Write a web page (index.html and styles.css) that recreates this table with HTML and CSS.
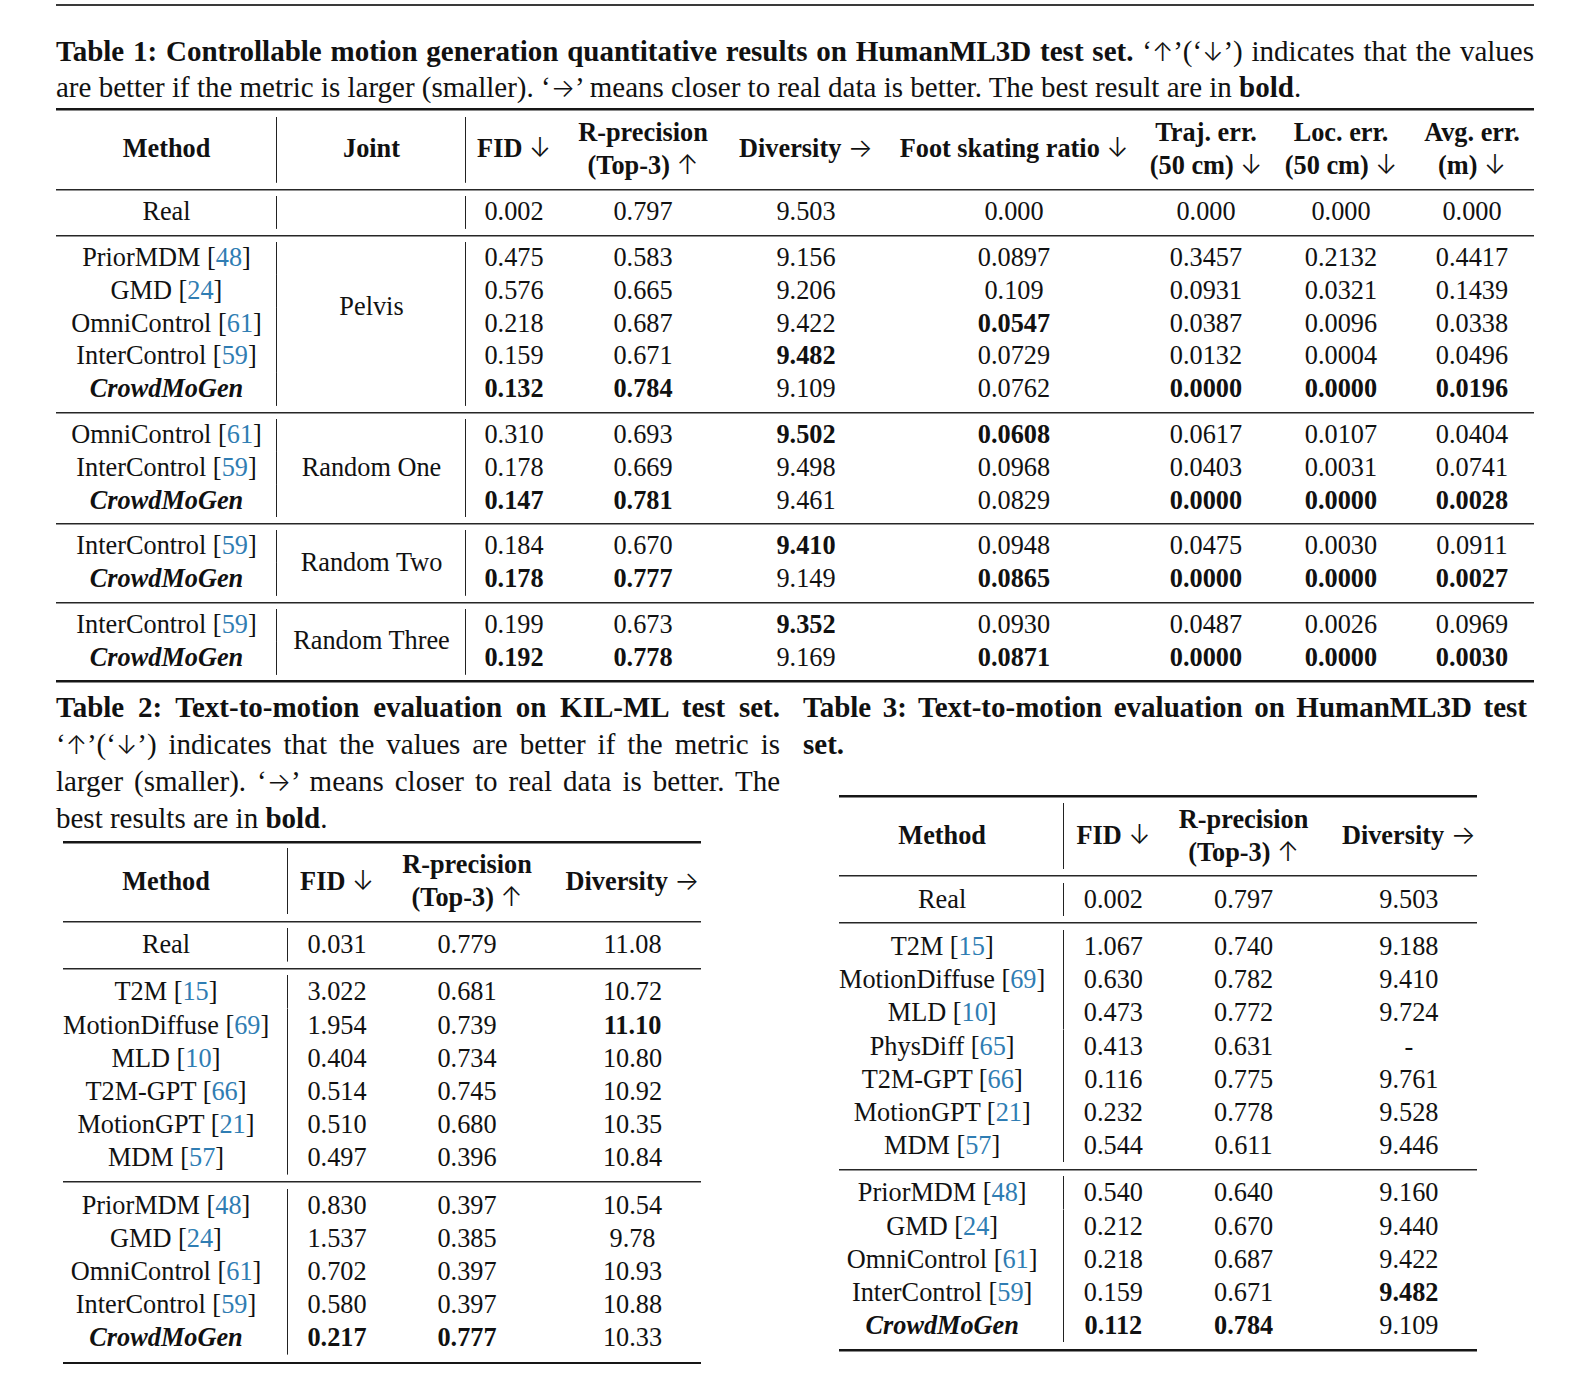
FILE: index.html
```html
<!DOCTYPE html>
<html lang="en">
<head>
<meta charset="utf-8">
<title>Tables</title>
<link rel="stylesheet" href="styles.css">
</head>
<body>
<div class="page">
  <div class="pagerule"></div>

  <section class="t1">
    <p class="cap cap1"><b>Table 1: Controllable motion generation quantitative results on HumanML3D test set.</b> ‘<span class="ar">↑</span>’(‘<span class="ar">↓</span>’) indicates that the values are better if the metric is larger (smaller). ‘<span class="ar">→</span>’ means closer to real data is better. The best result are in <b>bold</b>.</p>
    <table class="tab tab1">
      <colgroup>
        <col style="width:221px"><col style="width:189px"><col style="width:96px"><col style="width:162px"><col style="width:164px"><col style="width:252px"><col style="width:132px"><col style="width:138px"><col style="width:124px">
      </colgroup>
      <tr class="top"><td colspan="9"></td></tr>
      <tr class="hd">
        <th class="v">Method</th><th class="v">Joint</th><th>FID <span class="ar">↓</span></th><th>R-precision<br>(Top-3) <span class="ar">↑</span></th><th>Diversity <span class="ar">→</span></th><th>Foot skating ratio <span class="ar">↓</span></th><th>Traj. err.<br>(50 cm) <span class="ar">↓</span></th><th>Loc. err.<br>(50 cm) <span class="ar">↓</span></th><th>Avg. err.<br>(m) <span class="ar">↓</span></th>
      </tr>
      <tr class="mid"><td colspan="9"></td></tr>
      <tr><td class="v">Real</td><td class="v"></td><td>0.002</td><td>0.797</td><td>9.503</td><td>0.000</td><td>0.000</td><td>0.000</td><td>0.000</td></tr>
      <tr class="mid"><td colspan="9"></td></tr>
      <tr><td class="v">PriorMDM [<span class="c">48</span>]</td><td class="v" rowspan="4">Pelvis</td><td>0.475</td><td>0.583</td><td>9.156</td><td>0.0897</td><td>0.3457</td><td>0.2132</td><td>0.4417</td></tr>
      <tr><td class="v">GMD [<span class="c">24</span>]</td><td>0.576</td><td>0.665</td><td>9.206</td><td>0.109</td><td>0.0931</td><td>0.0321</td><td>0.1439</td></tr>
      <tr><td class="v">OmniControl [<span class="c">61</span>]</td><td>0.218</td><td>0.687</td><td>9.422</td><td><b>0.0547</b></td><td>0.0387</td><td>0.0096</td><td>0.0338</td></tr>
      <tr><td class="v">InterControl [<span class="c">59</span>]</td><td>0.159</td><td>0.671</td><td><b>9.482</b></td><td>0.0729</td><td>0.0132</td><td>0.0004</td><td>0.0496</td></tr>
      <tr><td class="v ours">CrowdMoGen</td><td class="v"></td><td><b>0.132</b></td><td><b>0.784</b></td><td>9.109</td><td>0.0762</td><td><b>0.0000</b></td><td><b>0.0000</b></td><td><b>0.0196</b></td></tr>
      <tr class="mid"><td colspan="9"></td></tr>
      <tr><td class="v">OmniControl [<span class="c">61</span>]</td><td class="v" rowspan="3">Random One</td><td>0.310</td><td>0.693</td><td><b>9.502</b></td><td><b>0.0608</b></td><td>0.0617</td><td>0.0107</td><td>0.0404</td></tr>
      <tr><td class="v">InterControl [<span class="c">59</span>]</td><td>0.178</td><td>0.669</td><td>9.498</td><td>0.0968</td><td>0.0403</td><td>0.0031</td><td>0.0741</td></tr>
      <tr><td class="v ours">CrowdMoGen</td><td><b>0.147</b></td><td><b>0.781</b></td><td>9.461</td><td>0.0829</td><td><b>0.0000</b></td><td><b>0.0000</b></td><td><b>0.0028</b></td></tr>
      <tr class="mid"><td colspan="9"></td></tr>
      <tr><td class="v">InterControl [<span class="c">59</span>]</td><td class="v" rowspan="2">Random Two</td><td>0.184</td><td>0.670</td><td><b>9.410</b></td><td>0.0948</td><td>0.0475</td><td>0.0030</td><td>0.0911</td></tr>
      <tr><td class="v ours">CrowdMoGen</td><td><b>0.178</b></td><td><b>0.777</b></td><td>9.149</td><td><b>0.0865</b></td><td><b>0.0000</b></td><td><b>0.0000</b></td><td><b>0.0027</b></td></tr>
      <tr class="mid"><td colspan="9"></td></tr>
      <tr><td class="v">InterControl [<span class="c">59</span>]</td><td class="v" rowspan="2">Random Three</td><td>0.199</td><td>0.673</td><td><b>9.352</b></td><td>0.0930</td><td>0.0487</td><td>0.0026</td><td>0.0969</td></tr>
      <tr><td class="v ours">CrowdMoGen</td><td><b>0.192</b></td><td><b>0.778</b></td><td>9.169</td><td><b>0.0871</b></td><td><b>0.0000</b></td><td><b>0.0000</b></td><td><b>0.0030</b></td></tr>
      <tr class="bot"><td colspan="9"></td></tr>
    </table>
  </section>

  <div class="cols">
    <section class="col">
      <p class="cap cap2"><b>Table 2: Text-to-motion evaluation on KIL-ML test set.</b> ‘<span class="ar">↑</span>’(‘<span class="ar">↓</span>’) indicates that the values are better if the metric is larger (smaller). ‘<span class="ar">→</span>’ means closer to real data is better. The best results are in <b>bold</b>.</p>
      <table class="tab tab2">
        <colgroup><col style="width:225px"><col style="width:98px"><col style="width:162px"><col style="width:153px"></colgroup>
        <tr class="top"><td colspan="4"></td></tr>
        <tr class="hd"><th class="v m">Method</th><th>FID <span class="ar">↓</span></th><th>R-precision<br>(Top-3) <span class="ar">↑</span></th><th class="d">Diversity <span class="ar">→</span></th></tr>
        <tr class="mid"><td colspan="4"></td></tr>
        <tr><td class="v m">Real</td><td>0.031</td><td>0.779</td><td class="d">11.08</td></tr>
        <tr class="mid"><td colspan="4"></td></tr>
        <tr><td class="v m">T2M [<span class="c">15</span>]</td><td>3.022</td><td>0.681</td><td class="d">10.72</td></tr>
        <tr><td class="v m">MotionDiffuse [<span class="c">69</span>]</td><td>1.954</td><td>0.739</td><td class="d"><b>11.10</b></td></tr>
        <tr><td class="v m">MLD [<span class="c">10</span>]</td><td>0.404</td><td>0.734</td><td class="d">10.80</td></tr>
        <tr><td class="v m">T2M-GPT [<span class="c">66</span>]</td><td>0.514</td><td>0.745</td><td class="d">10.92</td></tr>
        <tr><td class="v m">MotionGPT [<span class="c">21</span>]</td><td>0.510</td><td>0.680</td><td class="d">10.35</td></tr>
        <tr><td class="v m">MDM [<span class="c">57</span>]</td><td>0.497</td><td>0.396</td><td class="d">10.84</td></tr>
        <tr class="mid"><td colspan="4"></td></tr>
        <tr><td class="v m">PriorMDM [<span class="c">48</span>]</td><td>0.830</td><td>0.397</td><td class="d">10.54</td></tr>
        <tr><td class="v m">GMD [<span class="c">24</span>]</td><td>1.537</td><td>0.385</td><td class="d">9.78</td></tr>
        <tr><td class="v m">OmniControl [<span class="c">61</span>]</td><td>0.702</td><td>0.397</td><td class="d">10.93</td></tr>
        <tr><td class="v m">InterControl [<span class="c">59</span>]</td><td>0.580</td><td>0.397</td><td class="d">10.88</td></tr>
        <tr><td class="v m ours">CrowdMoGen</td><td><b>0.217</b></td><td><b>0.777</b></td><td class="d">10.33</td></tr>
        <tr class="bot"><td colspan="4"></td></tr>
      </table>
    </section>

    <section class="col">
      <p class="cap cap3"><b>Table 3: Text-to-motion evaluation on HumanML3D test set.</b></p>
      <table class="tab tab3">
        <colgroup><col style="width:225px"><col style="width:98px"><col style="width:162px"><col style="width:152px"></colgroup>
        <tr class="top"><td colspan="4"></td></tr>
        <tr class="hd"><th class="v m">Method</th><th>FID <span class="ar">↓</span></th><th>R-precision<br>(Top-3) <span class="ar">↑</span></th><th class="d">Diversity <span class="ar">→</span></th></tr>
        <tr class="mid"><td colspan="4"></td></tr>
        <tr><td class="v m">Real</td><td>0.002</td><td>0.797</td><td class="d">9.503</td></tr>
        <tr class="mid"><td colspan="4"></td></tr>
        <tr><td class="v m">T2M [<span class="c">15</span>]</td><td>1.067</td><td>0.740</td><td class="d">9.188</td></tr>
        <tr><td class="v m">MotionDiffuse [<span class="c">69</span>]</td><td>0.630</td><td>0.782</td><td class="d">9.410</td></tr>
        <tr><td class="v m">MLD [<span class="c">10</span>]</td><td>0.473</td><td>0.772</td><td class="d">9.724</td></tr>
        <tr><td class="v m">PhysDiff [<span class="c">65</span>]</td><td>0.413</td><td>0.631</td><td class="d">-</td></tr>
        <tr><td class="v m">T2M-GPT [<span class="c">66</span>]</td><td>0.116</td><td>0.775</td><td class="d">9.761</td></tr>
        <tr><td class="v m">MotionGPT [<span class="c">21</span>]</td><td>0.232</td><td>0.778</td><td class="d">9.528</td></tr>
        <tr><td class="v m">MDM [<span class="c">57</span>]</td><td>0.544</td><td>0.611</td><td class="d">9.446</td></tr>
        <tr class="mid"><td colspan="4"></td></tr>
        <tr><td class="v m">PriorMDM [<span class="c">48</span>]</td><td>0.540</td><td>0.640</td><td class="d">9.160</td></tr>
        <tr><td class="v m">GMD [<span class="c">24</span>]</td><td>0.212</td><td>0.670</td><td class="d">9.440</td></tr>
        <tr><td class="v m">OmniControl [<span class="c">61</span>]</td><td>0.218</td><td>0.687</td><td class="d">9.422</td></tr>
        <tr><td class="v m">InterControl [<span class="c">59</span>]</td><td>0.159</td><td>0.671</td><td class="d"><b>9.482</b></td></tr>
        <tr><td class="v m ours">CrowdMoGen</td><td><b>0.112</b></td><td><b>0.784</b></td><td class="d">9.109</td></tr>
        <tr class="bot"><td colspan="4"></td></tr>
      </table>
    </section>
  </div>
</div>
</body>
</html>
```

FILE: styles.css
```css
html, body {
  margin: 0;
  padding: 0;
  background: #ffffff;
}

body {
  font-family: "Liberation Serif", "Times New Roman", serif;
  color: #111111;
  font-size: 26.3px;
}

.page {
  margin-left: 56px;
  width: 1478px;
  padding-top: 4px;
}

.pagerule {
  height: 1.5px;
  background: #3a3a3a;
}

.cap {
  margin: 0;
  text-align: justify;
  line-height: 36px;
  font-size: 29px;
}

.cap b { font-weight: bold; }

.cap .ar {
  font-size: 0.88em;
  line-height: 1;
}

.cap1 {
  margin-top: 27px;
  margin-bottom: 3px;
}

.tab {
  border-collapse: separate;
  border-spacing: 0;
  table-layout: fixed;
}

.tab1 { width: 1478px; }

.tab td, .tab th {
  padding: 0;
  text-align: center;
  white-space: nowrap;
  line-height: 32.8px;
  vertical-align: middle;
}

.tab th { font-weight: bold; }

.tab b { font-weight: bold; }

.ar {
  font-family: "Inter", "DejaVu Sans", sans-serif;
  font-weight: 300;
  font-style: normal;
  line-height: 1;
}

.c { color: #2f7db3; }

.ours {
  font-weight: bold;
  font-style: italic;
}

.v {
  background: linear-gradient(#222, #222) right / 1.3px 100% no-repeat;
}

.tab tr.top td, .tab tr.mid td, .tab tr.bot td {
  padding: 0;
  font-size: 0;
  line-height: 0;
}

.tab tr.top td {
  height: 9.5px;
  background: linear-gradient(#161616, #161616) top / 100% 2.5px no-repeat;
}

.tab tr.mid td {
  height: 13px;
  background: linear-gradient(#262626, #262626) center / 100% 1.5px no-repeat;
}

.tab tr.bot td {
  height: 8.25px;
  background: linear-gradient(#161616, #161616) bottom / 100% 2.5px no-repeat;
}

.tab1 tr.hd + tr.mid td { height: 13.6px; }

.cols {
  display: flex;
  gap: 23px;
  margin-top: 6px;
}

.col {
  width: 724px;
  flex: none;
}

.cap2, .cap3 {
  line-height: 37.2px;
}

.tab2, .tab3 {
  width: 638px;
}

.tab2 td, .tab2 th, .tab3 td, .tab3 th {
  line-height: 33.2px;
}

.tab2 tr.top td, .tab3 tr.top td { height: 7.45px; }
.tab2 tr.mid td, .tab3 tr.mid td { height: 13.9px; }
.tab2 tr.bot td, .tab3 tr.bot td { height: 9.6px; }

.tab2 {
  margin-left: 7px;
  margin-top: 3px;
}

.tab3 {
  margin-left: 36px;
  margin-top: 32px;
}

.m { padding-right: 19px !important; }

.d { padding-left: 16px !important; }
```
